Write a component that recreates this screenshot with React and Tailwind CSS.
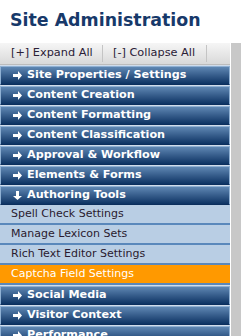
import React from 'react';

const before = ['Site Properties / Settings', 'Content Creation', 'Content Formatting', 'Content Classification', 'Approval & Workflow', 'Elements & Forms'];
const subItems = ['Spell Check Settings', 'Manage Lexicon Sets', 'Rich Text Editor Settings', 'Captcha Field Settings'];
const after = ['Social Media', 'Visitor Context', 'Performance'];

const Arrow = ({ open }) => (
  <svg width="9" height="9" viewBox="0 0 9 9" className="shrink-0">
    {open ? (
      <path d="M3 0h3v5h3L4.5 9 0 5h3z" fill="white" />
    ) : (
      <path d="M0 3h5V0l4 4.5L5 9V6H0z" fill="white" />
    )}
  </svg>
);

const Header = ({ label, open }) => (
  <div className="h-[20px] border-t border-[#d0dceb] bg-[#0b2f5d]">
    <div className="h-[19px] flex items-center gap-[5px] pl-[12px] border border-[#8fb0d3] border-b-[#0b2f5d] bg-gradient-to-b from-[#5f87b3] to-[#0c3363] text-white font-bold text-[11.2px]">
      <Arrow open={open} />
      <span>{label}</span>
    </div>
  </div>
);

const Item = ({ label, active }) => (
  <div className={`h-[20px] flex items-center pl-[11px] text-[11px] border-b-2 border-[#5a88bb] ${active ? 'bg-[#ff9900] text-white' : 'bg-[#b9cee4] text-[#2a1a2e]'}`}>
    {label}
  </div>
);

export default function App() {
  return (
    <div className="w-[243px] h-[336px] overflow-hidden bg-white" style={{ fontFamily: '"DejaVu Sans", Verdana, sans-serif' }}>
      <h1 className="pl-[10px] pt-[7px] h-[43px] text-[17.4px] font-bold text-[#17396a]">Site Administration</h1>
      <div className="flex">
        <div className="w-[230px]">
          <div className="h-[22px] flex items-center text-[11.3px] text-[#2a2036] bg-gradient-to-b from-[#f6f6f6] to-[#d9d9d9] border-b border-[#bcbcbc]">
            <div className="w-[103px] pl-[11px] border-r border-[#c4c4c4]">[+] Expand All</div>
            <div className="w-[104px] pl-[10px] border-r border-[#c4c4c4]">[-] Collapse All</div>
          </div>
          {before.map((l) => <Header key={l} label={l} />)}
          <Header label="Authoring Tools" open />
          {subItems.map((l, i) => <Item key={l} label={l} active={i === 3} />)}
          {after.map((l) => <Header key={l} label={l} />)}
        </div>
        <div className="w-[10px] h-[300px] bg-[#c8c8c8] ml-[1px]" />
      </div>
    </div>
  );
}
